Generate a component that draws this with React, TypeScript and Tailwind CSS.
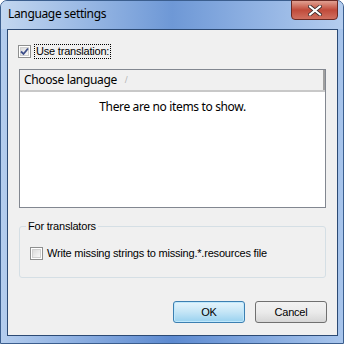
import React from "react";

function Check({ checked }: { checked: boolean }) {
  return (
    <div className="relative w-[13px] h-[13px] border border-[#8e8f8f] bg-white shrink-0">
      <div className="absolute inset-[1px] border border-[#d0d0d0] bg-gradient-to-br from-[#dcdcdc] to-[#f8f8f8]" />
      {checked && (
        <svg className="absolute left-[1px] top-[1px]" width="9" height="9" viewBox="0 0 9 9">
          <path d="M1 4.5 L3.5 7 L8 1.5" fill="none" stroke="#3e4f8a" strokeWidth="1.8" />
        </svg>
      )}
    </div>
  );
}

export default function App() {
  const ui = { fontFamily: '"Noto Sans", "Open Sans", sans-serif', letterSpacing: "-0.35px" };
  const tah = { fontFamily: '"Liberation Sans", Arial, sans-serif', letterSpacing: "-0.2px" };
  return (
    <div className="w-[346px] h-[344px] bg-white">
      <div className="relative w-[344px] h-[344px] rounded-t-[7px] border border-[#3b5e8e] bg-gradient-to-r from-[#b4cdee] via-[#5d8ad0] to-[#a8c5ec] pt-[28px] pl-[6px] pr-[5px] pb-[7px] flex flex-col">
        <div className="absolute left-0 top-0 right-0 h-[28px] bg-gradient-to-r from-[#c3d7f0] via-[#6e98d6] to-[#b4cdef] rounded-t-[6px]" />
        <div className="absolute left-[7px] top-[4px] text-[12px] text-black" style={ui}>
          Language settings
        </div>
        <div className="absolute left-[290px] top-[-1px] w-[47px] h-[20px] rounded-b-[4px] border border-[#6a2a24] bg-gradient-to-b from-[#e0a092] via-[#c04a3a] to-[#d07060] flex items-center justify-center">
          <svg width="14" height="11" viewBox="0 0 14 11">
            <path d="M2 1.5 L12 9.5 M12 1.5 L2 9.5" stroke="#3a2a2a" strokeWidth="3.6" strokeLinecap="square" />
            <path d="M2 1.5 L12 9.5 M12 1.5 L2 9.5" stroke="#ffffff" strokeWidth="2" strokeLinecap="square" />
          </svg>
        </div>
        <div className="relative flex-1 border border-[#2c4a74] bg-[#f0f0f0] flex flex-col">
          <div className="flex items-center mt-[14px] ml-[10px] gap-[3px]">
            <Check checked />
            <span className="text-[11px] leading-[13px] text-black border border-dotted border-black px-[1px]" style={tah}>
              Use translation:
            </span>
          </div>
          <div className="mt-[10px] ml-[11px] w-[307px] h-[139px] border border-[#828790] bg-white flex flex-col">
            <div className="h-[22px] bg-[#f0f0f0] border-b-2 border-[#c8c8c8] flex">
              <div className="w-[305px] border-r-2 border-[#a0a0a0] flex items-center pl-[4px] text-[12px] text-black" style={ui}>
                Choose language
                <span className="ml-[8px] text-[8px] text-[#b0b0b0]">/</span>
              </div>
            </div>
            <div className="text-center text-[12px] mt-[6px] text-black" style={ui}>
              There are no items to show.
            </div>
          </div>
          <div className="relative mt-[18px] ml-[11px] w-[307px] h-[52px] border border-[#d5dfe5] rounded-[3px]">
            <div className="absolute left-[6px] top-[-9px] bg-[#f0f0f0] px-[2px] text-[11px] text-black" style={tah}>
              For translators
            </div>
            <div className="flex items-center mt-[18px] ml-[10px] gap-[4px]">
              <Check checked={false} />
              <span className="text-[11px] text-black" style={tah}>
                Write missing strings to missing.*.resources file
              </span>
            </div>
          </div>
          <div className="mt-auto mb-[12px] flex justify-end gap-[10px] mr-[10px]">
            <button className="w-[72px] h-[22px] rounded-[3px] border border-[#3c7fb1] bg-gradient-to-b from-[#e5f4fc] via-[#c4e5f6] to-[#98d1ef] text-[11px] text-black shadow-[inset_0_0_0_1px_#bfe8fc]" style={tah}>
              OK
            </button>
            <button className="w-[72px] h-[22px] rounded-[3px] border border-[#707070] bg-gradient-to-b from-[#f2f2f2] via-[#ebebeb] to-[#d6d6d6] text-[11px] text-black" style={tah}>
              Cancel
            </button>
          </div>
        </div>
      </div>
    </div>
  );
}
